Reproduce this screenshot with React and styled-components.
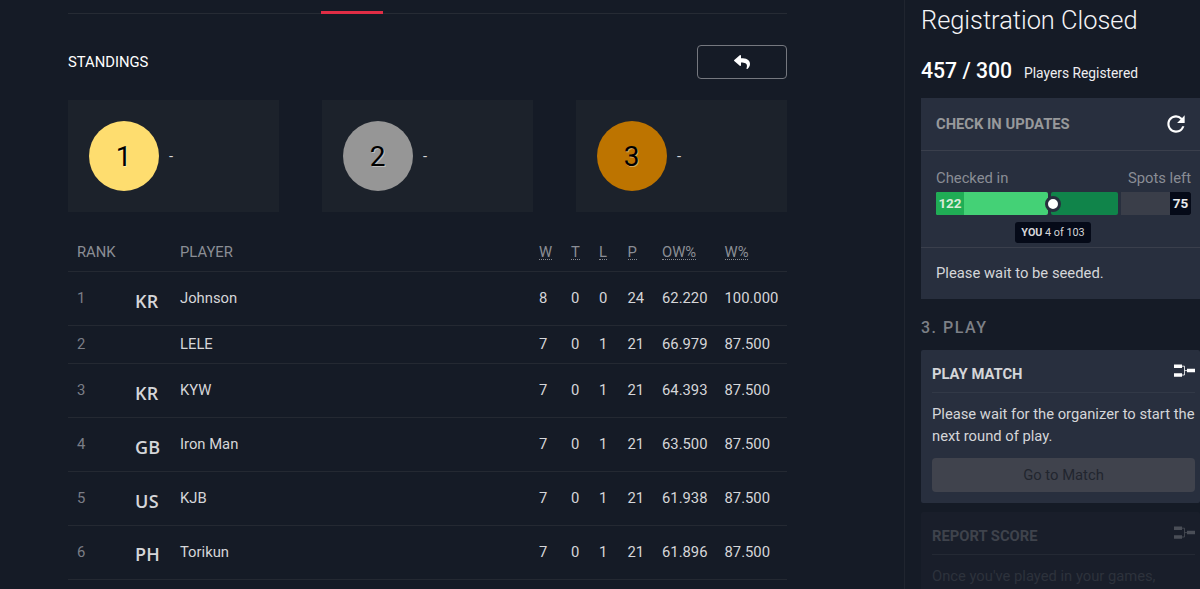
import React from "react";
import styled, { createGlobalStyle } from "styled-components";
import { FaReply } from "react-icons/fa";
import { MdRefresh } from "react-icons/md";

const podium = [
  { place: 1, color: "#fedd6f" },
  { place: 2, color: "#969696" },
  { place: 3, color: "#bd7400" },
];

const columns = ["W", "T", "L", "P", "OW%", "W%"];

const players = [
  { rank: 1, flag: "KR", name: "Johnson", stats: ["8", "0", "0", "24", "62.220", "100.000"] },
  { rank: 2, flag: "", name: "LELE", stats: ["7", "0", "1", "21", "66.979", "87.500"] },
  { rank: 3, flag: "KR", name: "KYW", stats: ["7", "0", "1", "21", "64.393", "87.500"] },
  { rank: 4, flag: "GB", name: "Iron Man", stats: ["7", "0", "1", "21", "63.500", "87.500"] },
  { rank: 5, flag: "US", name: "KJB", stats: ["7", "0", "1", "21", "61.938", "87.500"] },
  { rank: 6, flag: "PH", name: "Torikun", stats: ["7", "0", "1", "21", "61.896", "87.500"] },
];

const BracketIcon = () => (
  <svg width="21" height="14" viewBox="0 0 21 14">
    <path d="M0 0.5h8v3.5H0zM0 9.2h8v3.5H0zM13 4.8h8v3.5h-8z" fill="currentColor" />
    <path d="M8 2.2h2.5v8.8H8M10.5 6.6H13" fill="none" stroke="currentColor" strokeWidth="0.8" />
  </svg>
);

const App = () => {
  return (
    <>
      <GlobalStyle />
      <Page>
        <Main>
          <TabBar>
            <ActiveTab />
          </TabBar>
          <Heading>
            <Title>STANDINGS</Title>
            <BackButton>
              <FaReply size={16} />
            </BackButton>
          </Heading>
          <Podium>
            {podium.map(({ place, color }) => (
              <PodiumCard key={place}>
                <Medal $color={color}>{place}</Medal>
                <span>-</span>
              </PodiumCard>
            ))}
          </Podium>
          <HeaderRow>
            <span>RANK</span>
            <span />
            <span>PLAYER</span>
            {columns.map(label => (
              <span key={label}>
                <Abbr>{label}</Abbr>
              </span>
            ))}
          </HeaderRow>
          {players.map(({ rank, flag, name, stats }) => (
            <PlayerRow key={rank} $compact={!flag}>
              <Rank>{rank}</Rank>
              <Flag>{flag}</Flag>
              <span>{name}</span>
              {stats.map((value, i) => (
                <span key={columns[i]}>{value}</span>
              ))}
            </PlayerRow>
          ))}
        </Main>

        <Sidebar>
          <Status>Registration Closed</Status>
          <Registered>
            <Count>457 / 300</Count>
            <CountLabel>Players Registered</CountLabel>
          </Registered>

          <CheckIn>
            <CheckInHeader>
              <CheckInTitle>CHECK IN UPDATES</CheckInTitle>
              <MdRefresh size={26} />
            </CheckInHeader>
            <CheckInBody>
              <Labels>
                <span>Checked in</span>
                <span>Spots left</span>
              </Labels>
              <Progress>
                <Bright>
                  <Checked>122</Checked>
                </Bright>
                <Remaining />
                <Open>
                  <Spots>75</Spots>
                </Open>
                <Marker />
                <Tooltip>
                  <b>YOU</b> 4 of 103
                </Tooltip>
              </Progress>
            </CheckInBody>
            <Seeding>Please wait to be seeded.</Seeding>
          </CheckIn>

          <Step>3. PLAY</Step>

          <Card>
            <CardHeader>
              <CardTitle>PLAY MATCH</CardTitle>
              <BracketIcon />
            </CardHeader>
            <CardText>
              Please wait for the organizer to start the next round of play.
            </CardText>
            <MatchButton disabled>Go to Match</MatchButton>
          </Card>

          <Card $inactive>
            <CardHeader>
              <CardTitle>REPORT SCORE</CardTitle>
              <BracketIcon />
            </CardHeader>
            <CardText $faded>Once you've played in your games,</CardText>
          </Card>
        </Sidebar>
      </Page>
    </>
  );
};

const GlobalStyle = createGlobalStyle`
  * {
    box-sizing: border-box;
  }
  body {
    margin: 0;
    overflow: hidden;
    background: #151b26;
    color: #d5d6d9;
    font-family: Roboto, "Liberation Sans", sans-serif;
    font-size: 14.8px;
  }
`;

const Page = styled.div`
  display: flex;
  justify-content: space-between;
  height: 589px;
  overflow: hidden;
`;

const Main = styled.main`
  width: 719px;
  margin-left: 68px;
`;

const TabBar = styled.div`
  display: flex;
  align-items: flex-end;
  height: 14px;
  padding-left: 253px;
  border-bottom: 1px solid #262b34;
`;

const ActiveTab = styled.div`
  width: 62px;
  height: 3px;
  margin-bottom: -1px;
  background: #e02d45;
`;

const Heading = styled.div`
  display: flex;
  justify-content: space-between;
  align-items: center;
  height: 34px;
  margin-top: 31px;
`;

const Title = styled.h2`
  margin: 0;
  color: #fff;
  font-size: 14.8px;
  font-weight: 400;
`;

const BackButton = styled.button`
  display: flex;
  justify-content: center;
  align-items: center;
  width: 90px;
  height: 34px;
  padding: 0;
  border: 1px solid #75787f;
  border-radius: 4px;
  background: transparent;
  color: #fff;
`;

const Podium = styled.div`
  display: grid;
  grid-template-columns: repeat(3, 211px);
  justify-content: space-between;
  margin-top: 21px;
`;

const PodiumCard = styled.div`
  display: flex;
  align-items: center;
  gap: 10px;
  height: 112px;
  padding-left: 21px;
  background: #1c222b;
`;

const Medal = styled.div`
  display: flex;
  justify-content: center;
  align-items: center;
  width: 70px;
  height: 70px;
  padding-right: 1px;
  border-radius: 50%;
  background: ${({ $color }) => $color};
  color: #000;
  font-size: 28px;
  text-shadow: 1px 1px 0 rgba(255, 255, 255, 0.4);
`;

const Row = styled.div`
  display: grid;
  grid-template-columns: 58px 45px 359px 32px 28px 28.5px 34.5px 62.5px 1fr;
  align-items: center;
  padding-left: 9px;
  border-bottom: 1px solid #242932;
`;

const HeaderRow = styled(Row)`
  height: 40px;
  margin-top: 20px;
  color: #8b8e95;
`;

const PlayerRow = styled(Row)`
  height: ${({ $compact }) => ($compact ? "38.4px" : "53.85px")};
  padding-bottom: 0.6px;
`;

const Abbr = styled.abbr`
  display: inline-block;
  border-bottom: 1px dotted #868990;
  line-height: 14px;
`;

const Rank = styled.span`
  color: #7b7e86;
`;

const Flag = styled.span`
  padding-top: 5px;
  font-family: "Open Sans", "Noto Sans", sans-serif;
  font-size: 18px;
  font-weight: 600;
  letter-spacing: 0.3px;
`;

const Sidebar = styled.aside`
  width: 296px;
  padding-left: 16px;
  border-left: 1px solid #20252f;
`;

const Status = styled.h1`
  margin: 0;
  padding-top: 4px;
  color: #f4f4f6;
  font-size: 25.4px;
  font-weight: 300;
  line-height: 32px;
`;

const Registered = styled.div`
  display: flex;
  align-items: baseline;
  gap: 12px;
  height: 62px;
  padding-top: 22px;
  color: #fff;
`;

const Count = styled.span`
  font-size: 21.2px;
  font-weight: 500;
  line-height: 26px;
`;

const CountLabel = styled.span`
  color: #eeeef0;
  font-size: 13.8px;
`;

const CheckIn = styled.section`
  height: 201px;
  background: #282f3e;
`;

const CheckInHeader = styled.div`
  display: flex;
  justify-content: space-between;
  align-items: center;
  height: 53px;
  padding: 0 11px 0 15px;
  border-bottom: 1px solid #3a3f4c;
  color: #fff;
`;

const CheckInTitle = styled.h3`
  margin: 0;
  color: #97999b;
  font-size: 14.75px;
  font-weight: 700;
`;

const CheckInBody = styled.div`
  height: 97px;
  padding: 17px 9px 0 15px;
  border-bottom: 1px solid #3a3f4c;
`;

const Labels = styled.div`
  display: flex;
  justify-content: space-between;
  color: #8a8d95;
  line-height: 20px;
`;

const Progress = styled.div`
  position: relative;
  display: flex;
  gap: 3px;
  height: 23px;
  margin-top: 4px;
  color: #e9ebec;
  font-size: 13.5px;
  font-weight: 700;
  line-height: 23px;
`;

const Bright = styled.div`
  width: 112px;
  border-radius: 2px;
  background: #44d176;
`;

const Checked = styled.div`
  width: 28px;
  border-radius: 2px 0 0 2px;
  background: #20ad55;
  color: #d8ead9;
  text-align: center;
`;

const Remaining = styled.div`
  width: 67px;
  border-radius: 2px;
  background: #10844a;
`;

const Open = styled.div`
  display: flex;
  flex: 1;
  justify-content: flex-end;
  background: #3a3e49;
`;

const Spots = styled.div`
  width: 21px;
  border-radius: 0 2px 2px 0;
  background: #050a18;
  text-align: center;
`;

const Marker = styled.div`
  position: absolute;
  top: 4px;
  left: 109px;
  width: 16px;
  height: 16px;
  border: 3px solid #282f3e;
  border-radius: 50%;
  background: #fff;
`;

const Tooltip = styled.div`
  position: absolute;
  top: 30px;
  left: 79px;
  width: 76px;
  height: 21px;
  border-radius: 3px;
  background: #050a18;
  color: #d5d6d9;
  font-size: 10.8px;
  font-weight: 400;
  line-height: 21px;
  text-align: center;
  white-space: nowrap;
`;

const Seeding = styled.div`
  padding-left: 15px;
  line-height: 50px;
`;

const Step = styled.h4`
  margin: 0;
  padding-top: 19px;
  height: 51px;
  color: #7d8087;
  font-size: 16px;
  font-weight: 500;
  letter-spacing: 1.5px;
  line-height: 20px;
`;

const Card = styled.section`
  height: 153px;
  margin-bottom: 9px;
  padding: 0 5px 0 11px;
  border-radius: 2px;
  background: ${({ $inactive }) => ($inactive ? "#191e2a" : "#282f3e")};
  color: ${({ $inactive }) => ($inactive ? "#3f434c" : "#d5d6d9")};

  svg {
    margin-bottom: 6px;
    color: ${({ $inactive }) => ($inactive ? "#4a4e57" : "#fff")};
  }
`;

const CardHeader = styled.div`
  display: flex;
  justify-content: space-between;
  align-items: center;
  height: 43px;
  padding-top: 5px;
  border-bottom: 1px solid rgba(255, 255, 255, 0.05);
`;

const CardTitle = styled.h3`
  margin: 0;
  font-size: 14.75px;
  font-weight: 700;
`;

const CardText = styled.p`
  margin: 0 -4px 0 0;
  padding-top: 10px;
  color: ${({ $faded }) => ($faded ? "#2d323c" : "#d5d6d9")};
  font-size: 14.75px;
  line-height: 22px;
`;

const MatchButton = styled.button`
  width: 100%;
  height: 34px;
  margin-top: 11px;
  padding: 0;
  border: 0;
  border-radius: 4px;
  background: #40434d;
  color: #22262f;
  font-family: inherit;
  font-size: 14.8px;
`;

export default App;
